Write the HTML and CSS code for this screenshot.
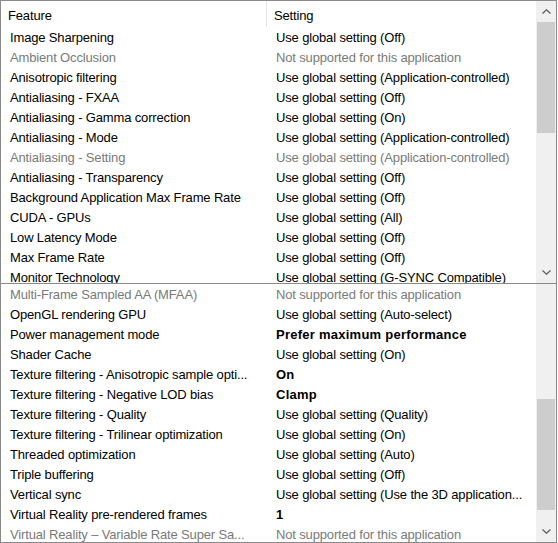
FILE: index.html
```html
<!DOCTYPE html>
<html>
<head>
<meta charset="utf-8">
<link rel="stylesheet" href="styles.css">
</head>
<body>
<div class="frame">
  <div class="pane pane-top">
    <div class="list">
      <div class="header">
        <div class="hcell hfeature">Feature</div>
        <div class="hcell hsetting">Setting</div>
      </div>
      <div class="row"><span class="c1">Image Sharpening</span><span class="c2">Use global setting (Off)</span></div>
      <div class="row dis"><span class="c1">Ambient Occlusion</span><span class="c2">Not supported for this application</span></div>
      <div class="row"><span class="c1">Anisotropic filtering</span><span class="c2">Use global setting (Application-controlled)</span></div>
      <div class="row"><span class="c1">Antialiasing - FXAA</span><span class="c2">Use global setting (Off)</span></div>
      <div class="row"><span class="c1">Antialiasing - Gamma correction</span><span class="c2">Use global setting (On)</span></div>
      <div class="row"><span class="c1">Antialiasing - Mode</span><span class="c2">Use global setting (Application-controlled)</span></div>
      <div class="row dis"><span class="c1">Antialiasing - Setting</span><span class="c2">Use global setting (Application-controlled)</span></div>
      <div class="row"><span class="c1">Antialiasing - Transparency</span><span class="c2">Use global setting (Off)</span></div>
      <div class="row"><span class="c1">Background Application Max Frame Rate</span><span class="c2">Use global setting (Off)</span></div>
      <div class="row"><span class="c1">CUDA - GPUs</span><span class="c2">Use global setting (All)</span></div>
      <div class="row"><span class="c1">Low Latency Mode</span><span class="c2">Use global setting (Off)</span></div>
      <div class="row"><span class="c1">Max Frame Rate</span><span class="c2">Use global setting (Off)</span></div>
      <div class="row"><span class="c1">Monitor Technology</span><span class="c2">Use global setting (G-SYNC Compatible)</span></div>
    </div>
    <div class="scrollbar sb-top">
      <div class="sbtn"><svg width="9" height="5" viewBox="0 0 9 5"><path d="M0.5 4.5 L4.5 0.8 L8.5 4.5" fill="none" stroke="#606060" stroke-width="1.3"/></svg></div>
      <div class="thumb thumb-top"></div>
      <div class="track"></div>
      <div class="sbtn"><svg width="9" height="5" viewBox="0 0 9 5"><path d="M0.5 0.5 L4.5 4.2 L8.5 0.5" fill="none" stroke="#606060" stroke-width="1.3"/></svg></div>
    </div>
  </div>
  <div class="split"></div>
  <div class="pane pane-bottom">
    <div class="list">
      <div class="row dis"><span class="c1">Multi-Frame Sampled AA (MFAA)</span><span class="c2">Not supported for this application</span></div>
      <div class="row"><span class="c1">OpenGL rendering GPU</span><span class="c2">Use global setting (Auto-select)</span></div>
      <div class="row"><span class="c1">Power management mode</span><span class="c2 b">Prefer maximum performance</span></div>
      <div class="row"><span class="c1">Shader Cache</span><span class="c2">Use global setting (On)</span></div>
      <div class="row"><span class="c1">Texture filtering - Anisotropic sample opti...</span><span class="c2 b">On</span></div>
      <div class="row"><span class="c1">Texture filtering - Negative LOD bias</span><span class="c2 b">Clamp</span></div>
      <div class="row"><span class="c1">Texture filtering - Quality</span><span class="c2">Use global setting (Quality)</span></div>
      <div class="row"><span class="c1">Texture filtering - Trilinear optimization</span><span class="c2">Use global setting (On)</span></div>
      <div class="row"><span class="c1">Threaded optimization</span><span class="c2">Use global setting (Auto)</span></div>
      <div class="row"><span class="c1">Triple buffering</span><span class="c2">Use global setting (Off)</span></div>
      <div class="row"><span class="c1">Vertical sync</span><span class="c2">Use global setting (Use the 3D application...</span></div>
      <div class="row"><span class="c1">Virtual Reality pre-rendered frames</span><span class="c2 b">1</span></div>
      <div class="row dis"><span class="c1">Virtual Reality – Variable Rate Super Sa...</span><span class="c2">Not supported for this application</span></div>
    </div>
    <div class="scrollbar sb-bottom">
      <div class="track track-upper"></div>
      <div class="thumb thumb-bottom"></div>
      <div class="track"></div>
      <div class="sbtn"><svg width="9" height="5" viewBox="0 0 9 5"><path d="M0.5 0.5 L4.5 4.2 L8.5 0.5" fill="none" stroke="#606060" stroke-width="1.3"/></svg></div>
    </div>
  </div>
</div>
</body>
</html>
```

FILE: styles.css
```css
html, body {
  margin: 0;
  padding: 0;
  background: #ffffff;
}

.frame {
  width: 557px;
  height: 543px;
  box-sizing: border-box;
  border: 1px solid #8a8a8a;
  display: flex;
  flex-direction: column;
  font-family: "Liberation Sans", Arial, sans-serif;
  font-size: 13px;
  letter-spacing: -0.15px;
  color: #000;
}

.pane {
  display: flex;
  overflow: hidden;
}

.pane-top {
  height: 282px;
}

.pane-bottom {
  flex: 1;
}

.split {
  height: 1px;
  background: #8a8a8a;
}

.list {
  flex: 1;
  overflow: hidden;
}

.header {
  display: grid;
  grid-template-columns: 266px 1fr;
  height: 26px;
}

.hcell {
  display: flex;
  align-items: center;
  padding-top: 3px;
}

.hfeature {
  padding-left: 7px;
  border-right: 1px solid #e5e5e5;
}

.hsetting {
  padding-left: 7px;
}

.row {
  display: grid;
  grid-template-columns: 266px 1fr;
  height: 20px;
  line-height: 22px;
  white-space: nowrap;
  overflow: hidden;
}

.c1 {
  padding-left: 9px;
  overflow: hidden;
}

.c2 {
  padding-left: 9px;
  overflow: hidden;
}

.b {
  font-weight: bold;
  letter-spacing: 0.25px;
}

.dis {
  color: #7a7a7a;
}

.scrollbar {
  width: 20px;
  background: #f0f0f0;
  display: flex;
  flex-direction: column;
  align-items: center;
}

.sbtn {
  height: 21px;
  width: 20px;
  display: flex;
  align-items: center;
  justify-content: center;
  flex: none;
}

.track {
  flex: 1;
}

.track-upper {
  flex: none;
  height: 115px;
}

.thumb {
  width: 18px;
  background: #cdcdcd;
  flex: none;
}

.thumb-top {
  height: 111px;
}

.thumb-bottom {
  height: 111px;
}
```
